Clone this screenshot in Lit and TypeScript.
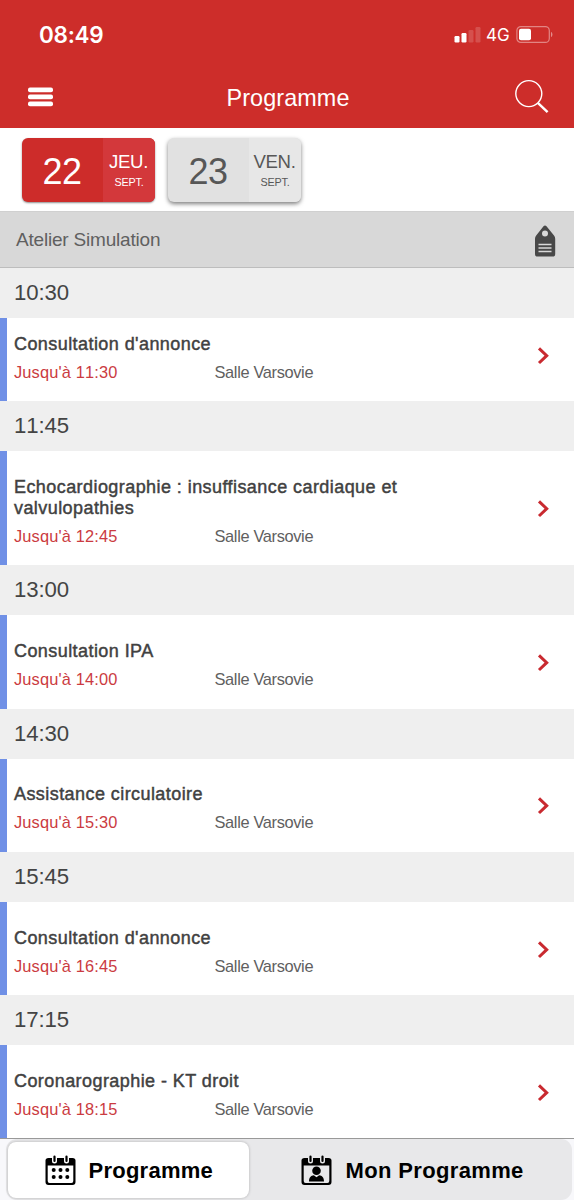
import { LitElement, html, css, svg } from "lit";
import { customElement, property } from "lit/decorators.js";
import { classMap } from "lit/directives/class-map.js";

interface Session {
  start: string;
  title: string;
  end: string;
  room: string;
}

const ROOM = "Salle Varsovie";

const SESSIONS: Session[] = [
  { start: "10:30", title: "Consultation d'annonce", end: "11:30", room: ROOM },
  { start: "11:45", title: "Echocardiographie : insuffisance cardiaque et valvulopathies", end: "12:45", room: ROOM },
  { start: "13:00", title: "Consultation IPA", end: "14:00", room: ROOM },
  { start: "14:30", title: "Assistance circulatoire", end: "15:30", room: ROOM },
  { start: "15:45", title: "Consultation d'annonce", end: "16:45", room: ROOM },
  { start: "17:15", title: "Coronarographie - KT droit", end: "18:15", room: ROOM },
];

@customElement("status-bar")
class StatusBar extends LitElement {
  static styles = css`
    :host { display: flex; justify-content: space-between; height: 69px; padding: 0 21px 0 39px; color: #fff; box-sizing: border-box; }
    .clock { font: 600 22.5px/26px Inter, sans-serif; padding-top: 22px; letter-spacing: -0.3px; }
    .right { display: flex; align-items: flex-start; padding-top: 25px; }
    .net { font: 400 17px/20px Inter, sans-serif; width: 30px; }
    svg { display: block; }
    .bars { margin: 1px 5px 0 0; }
  `;
  render() {
    return html`
      <div class="clock">08:49</div>
      <div class="right">
        <svg class="bars" width="27" height="17" viewBox="0 0 27 17" fill="#fff">
          <rect x="0.5" y="10" width="5" height="6.5" rx="1.2" />
          <rect x="7.5" y="7" width="5" height="9.5" rx="1.2" />
          <rect x="14.5" y="4" width="5" height="12.5" rx="1.2" opacity=".17" />
          <rect x="21.5" y="1" width="5" height="15.5" rx="1.2" opacity=".17" />
        </svg>
        <div class="net">4G</div>
        <svg width="37" height="19" viewBox="0 0 37 19">
          <rect x="0.9" y="1.6" width="32.4" height="15.8" rx="4" fill="none" stroke="#fff" stroke-opacity=".42" stroke-width="1.2" />
          <rect x="3" y="3.7" width="12" height="11.6" rx="2" fill="#fff" />
          <path d="M35 7c1.9.6 1.9 4.4 0 5z" fill="#fff" fill-opacity=".45" />
        </svg>
      </div>
    `;
  }
}

@customElement("nav-header")
class NavHeader extends LitElement {
  static styles = css`
    :host { display: grid; grid-template-columns: 80px 1fr 80px; height: 59px; color: #fff; }
    .menu { padding: 18px 0 0 28px; }
    .title { text-align: center; font-size: 23.4px; line-height: 28px; letter-spacing: 0.1px; padding-top: 15px; padding-left: 2px; }
    .search { padding: 10px 0 0 20px; }
    svg { display: block; }
  `;
  render() {
    return html`
      <div class="menu">
        <svg width="25" height="20" viewBox="0 0 25 20" fill="#fff">
          <rect x="0" y="0.6" width="25" height="4.6" rx="2" />
          <rect x="0" y="7.6" width="25" height="4.6" rx="2" />
          <rect x="0" y="14.6" width="25" height="4.6" rx="2" />
        </svg>
      </div>
      <div class="title">Programme</div>
      <div class="search">
        <svg width="36" height="36" viewBox="0 0 36 36" fill="none" stroke="#fff">
          <circle cx="14.8" cy="14.6" r="13" stroke-width="1.4" />
          <path d="M23.8 23.8 33.6 33.2" stroke-width="2.4" />
        </svg>
      </div>
    `;
  }
}

@customElement("date-chip")
class DateChip extends LitElement {
  @property() day = "";
  @property() weekday = "";
  @property() month = "";
  @property({ type: Boolean }) selected = false;

  static styles = css`
    :host { display: block; }
    .chip { display: grid; grid-template-columns: 81px 52px; height: 64px; border-radius: 6px; overflow: hidden; background: #e1e1e1; color: #575757; box-shadow: 0 2px 4px rgba(0, 0, 0, 0.5); }
    .day { font-size: 36px; line-height: 64px; text-align: center; padding-top: 2px; padding-right: 1px; letter-spacing: -0.4px; }
    .side { background: #e7e7e7; text-align: center; padding-top: 14px; }
    .weekday { font-size: 18.6px; line-height: 20px; letter-spacing: -0.3px; white-space: nowrap; margin-left: -1px; }
    .month { font-size: 10.8px; line-height: 13px; padding-top: 4px; letter-spacing: -0.2px; }
    .selected { background: #cd2c2a; color: #fff; box-shadow: 0 1px 2px rgba(0, 0, 0, 0.45); }
    .selected .side { background: #d3383b; }
  `;
  render() {
    return html`
      <div class=${classMap({ chip: true, selected: this.selected })}>
        <div class="day">${this.day}</div>
        <div class="side">
          <div class="weekday">${this.weekday}</div>
          <div class="month">${this.month}</div>
        </div>
      </div>
    `;
  }
}

@customElement("session-item")
class SessionItem extends LitElement {
  @property({ attribute: false }) session!: Session;

  static styles = css`
    :host { display: block; }
    .time { height: 50px; line-height: 49px; padding-left: 14px; background: #efefef; color: #444; font-size: 22.2px; letter-spacing: -0.1px; font-kerning: none; }
    .card { display: flex; align-items: flex-start; border-left: 7px solid #7090e6; background: #fff; padding: var(--card-top, 25.6px) 24px 18.8px 7px; }
    .body { width: 430px; }
    .title { font-size: 18px; line-height: 20.8px; letter-spacing: 0.43px; color: #414141; -webkit-text-stroke: 0.45px #414141; }
    .meta { display: grid; grid-template-columns: 200.5px 1fr; font-size: 16.4px; line-height: 22px; padding-top: 6.1px; color: #606060; }
    .until { color: #cb3b41; letter-spacing: 0.14px; font-kerning: none; }
    .room { letter-spacing: -0.35px; }
    .arrow { display: flex; align-self: stretch; align-items: center; margin: -5px 0 0 auto; }
    svg { display: block; }
  `;
  render() {
    const s = this.session;
    return html`
      <div class="time">${s.start}</div>
      <div class="card">
        <div class="body">
          <div class="title">${s.title}</div>
          <div class="meta">
            <span class="until">Jusqu'à ${s.end}</span>
            <span class="room">${s.room}</span>
          </div>
        </div>
        <div class="arrow">
          <svg width="13" height="20" viewBox="0 0 13 20" fill="none" stroke="#c92a30" stroke-width="3">
            <path d="M2 2.400 9.700 9.700 2 17" />
          </svg>
        </div>
      </div>
    `;
  }
}

@customElement("tab-bar")
class TabBar extends LitElement {
  static styles = css`
    :host { display: flex; height: 62px; box-sizing: border-box; border-top: 1px solid #999; background: #f8f8fb; padding: 0 2px 0 6px; }
    .track { display: flex; flex: 1; background: #e8e8ea; border-radius: 11px; }
    .tab { display: flex; align-items: center; color: #000; font-size: 22px; font-weight: 700; line-height: 28px; white-space: nowrap; }
    .active { width: 241px; height: 56px; margin: 3px 0 0 2px; border-radius: 8px; background: #fff; box-shadow: 0 0 3px rgba(0, 0, 0, 0.25); box-sizing: border-box; padding-left: 36.5px; }
    .other { height: 56px; margin: 3px 0 0 52px; }
    .label { margin-left: 13px; padding-top: 1px; letter-spacing: 0.25px; }
    .mine { letter-spacing: 0.35px; margin-left: 13.5px; }
    svg { display: block; }
  `;
  private calendar(detail: unknown, knock: string) {
    return html`
      <svg width="31" height="31" viewBox="0 0 31 31">
        <path d="M3.500 3h24Q30.500 3 30.500 5.500V27q0 3-3 3H3.500q-3 0-3-3V5.500Q.500 3 3.500 3zM2.700 10.500V26q0 1.900 1.900 1.900h21.800q1.900 0 1.900-1.900V10.500z" fill="#000" fill-rule="evenodd" />
        <path d="M9.500 2V6M21.500 2V6" stroke=${knock} stroke-width="5" stroke-linecap="round" />
        <path d="M9.500 1.500V6M21.500 1.500V6" stroke="#000" stroke-width="2.200" stroke-linecap="round" />
        ${detail}
      </svg>
    `;
  }
  render() {
    const dots = svg`${[15, 22].map((y) => [8.7, 15.5, 22.3].map((x) => svg`<circle cx=${x} cy=${y} r="2" />`))}`;
    const person = svg`<circle cx="15.500" cy="15.800" r="4.300" /><path d="M8 26.500c0-4.300 2-5.600 4.800-6.200l2.700 2 2.700-2c2.800.6 4.800 1.900 4.800 6.200z" />`;
    return html`
      <div class="track">
        <div class="tab active">${this.calendar(dots, "#fff")}<span class="label">Programme</span></div>
        <div class="tab other">${this.calendar(person, "#e8e8ea")}<span class="label mine">Mon Programme</span></div>
      </div>
    `;
  }
}

@customElement("app-root")
class AppRoot extends LitElement {
  static styles = css`
    :host { display: flex; flex-direction: column; width: 574px; height: 1200px; overflow: hidden; background: #fff; font-family: "Liberation Sans", Arial, sans-serif; }
    .top { background: #cd2d2a; flex: none; }
    .dates { display: flex; gap: 13px; height: 83px; padding: 10px 22px 0; box-sizing: border-box; flex: none; }
    .track { display: flex; justify-content: space-between; height: 56.5px; box-sizing: border-box; border-top: 1px solid #d0d0d0; border-bottom: 1px solid #bdbdbd; background: #d8d8d8; padding: 0 18px 0 16px; color: #606060; font-size: 19px; line-height: 56px; letter-spacing: -0.2px; flex: none; }
    .tag { display: block; margin-top: 13px; }
    .list { flex: 1; min-height: 0; overflow: hidden; }
    .first { --card-top: 16.2px; }
    tab-bar { flex: none; }
  `;
  render() {
    return html`
      <div class="top">
        <status-bar></status-bar>
        <nav-header></nav-header>
      </div>
      <div class="dates">
        <date-chip day="22" weekday="JEU." month="SEPT." selected></date-chip>
        <date-chip day="23" weekday="VEN." month="SEPT."></date-chip>
      </div>
      <div class="track">
        <span>Atelier Simulation</span>
        <svg class="tag" width="22" height="33" viewBox="0 0 22 33">
          <path fill-rule="evenodd" fill="#484848" d="M9.500 1.300q1.500-1.400 3 0l7.500 9.200q1.200 1.500 1.200 3.300V29q0 2.600-2.600 2.600H3.600Q1 31.600 1 29V13.800q0-1.800 1.200-3.300zM11 5.600a3 3 0 1 0 0 6 3 3 0 0 0 0-6z" />
          <path d="M4.500 19.500h13M4.500 23h13M4.500 26.500h13" stroke="#d8d8d8" stroke-width="1.400" />
        </svg>
      </div>
      <div class="list">
        ${SESSIONS.map((s, i) => html`<session-item class=${classMap({ first: i === 0 })} .session=${s}></session-item>`)}
      </div>
      <tab-bar></tab-bar>
    `;
  }
}
